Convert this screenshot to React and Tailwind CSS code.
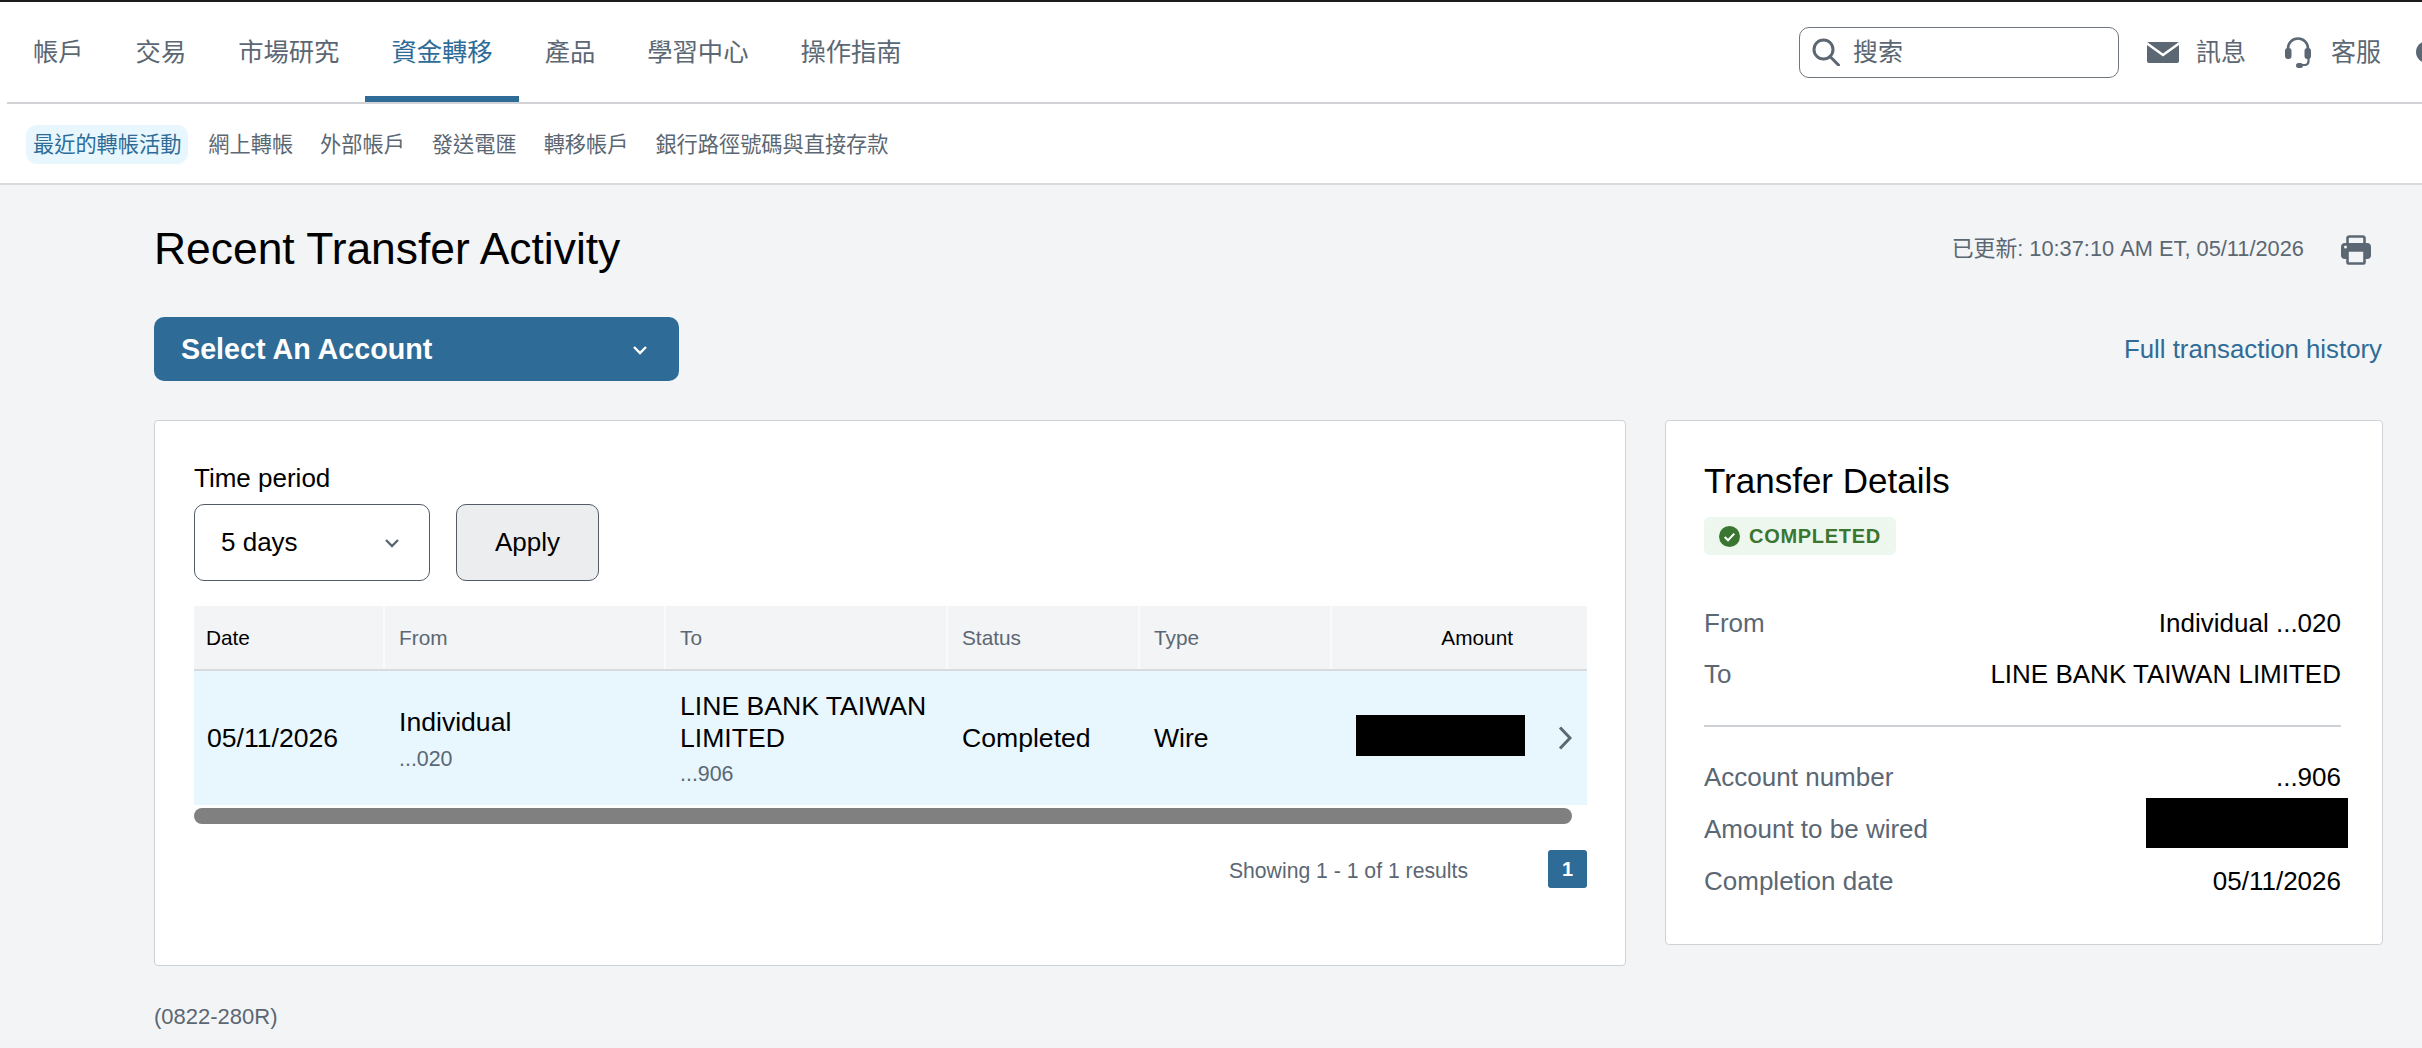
import React from 'react';

const mainNav = ['帳戶', '交易', '市場研究', '資金轉移', '產品', '學習中心', '操作指南'];
const subNav = ['最近的轉帳活動', '網上轉帳', '外部帳戶', '發送電匯', '轉移帳戶', '銀行路徑號碼與直接存款'];

const Chevron = ({ className = '' }) => (
  <svg viewBox="0 0 16 10" className={className} fill="none" stroke="currentColor" strokeWidth="2.4">
    <path d="M2 2l6 6 6-6" />
  </svg>
);

const SearchIcon = () => (
  <svg viewBox="0 0 28 28" className="w-[28px] h-[28px] shrink-0" fill="none" stroke="#5b6773" strokeWidth="3">
    <circle cx="11.5" cy="11.5" r="9.5" />
    <path d="M18 18.5l8.5 8.5" strokeLinecap="round" />
  </svg>
);

const MailIcon = () => (
  <svg viewBox="0 0 32 21" className="w-[32px] h-[21px] shrink-0">
    <rect width="32" height="21" rx="2" fill="#5b6773" />
    <path d="M0 1.5l16 11.5 16-11.5" fill="none" stroke="#fff" strokeWidth="2.6" />
  </svg>
);

const HeadsetIcon = () => (
  <svg viewBox="0 0 26 31" className="w-[26px] h-[31px] shrink-0" fill="none">
    <path d="M3 14V11.5a10 10 0 0 1 20 0V14" stroke="#5b6773" strokeWidth="2.6" />
    <rect x="0" y="11" width="6.5" height="11" rx="3" fill="#5b6773" />
    <rect x="19.5" y="11" width="6.5" height="11" rx="3" fill="#5b6773" />
    <path d="M23.5 21v3.5a3.5 3.5 0 0 1-3.5 3.5h-4" stroke="#5b6773" strokeWidth="2.2" />
    <rect x="11" y="26" width="7" height="5" rx="2.5" fill="#5b6773" />
  </svg>
);

const PrinterIcon = () => (
  <svg viewBox="0 0 30 30" className="w-[30px] h-[30px] shrink-0">
    <path d="M6.5 10V3.5a2 2 0 0 1 2-2h13a2 2 0 0 1 2 2V10" fill="none" stroke="#5b6773" strokeWidth="2.6" />
    <rect x="0" y="8" width="30" height="16" rx="4" fill="#5b6773" />
    <rect x="6.5" y="15.5" width="17" height="13" rx="1" fill="#f3f4f6" stroke="#5b6773" strokeWidth="2.6" />
    <circle cx="4.5" cy="12" r="1.5" fill="#f3f4f6" />
  </svg>
);

const CheckBadgeIcon = () => (
  <svg viewBox="0 0 22 22" className="w-[21px] h-[21px] shrink-0">
    <circle cx="11" cy="11" r="11" fill="#3a7630" />
    <path d="M6 11.5l3.5 3.5 6.5-7" fill="none" stroke="#fff" strokeWidth="2.2" />
  </svg>
);

const DetailRow = ({ label, children }) => (
  <div className="flex items-center justify-between h-[51px]">
    <span className="text-[#5b6773]">{label}</span>
    {children}
  </div>
);

const HeaderCell = ({ children, className = '' }) => (
  <div className={`flex items-center text-[20.8px] border-r-2 border-[#f9fafb] ${className}`}>
    {children}
  </div>
);

export default function App() {
  return (
    <div className="w-full h-[1048px] overflow-hidden bg-[#f3f4f6] text-[26px] text-black font-['Liberation_Sans','Noto_Sans_CJK_TC',sans-serif]">
      {/* Top nav */}
      <div className="bg-white border-t-2 border-[#1c1c1c]">
        <div className="flex ml-[7px] h-[102px] border-b-2 border-[#d1d3d6]">
          {mainNav.map((item, i) => (
            <div
              key={item}
              className={`flex items-center px-[26px] text-[25.3px] pt-[8px] border-b-[6px] ${i === 3 ? 'text-[#2e6c97] border-[#2e6c97]' : 'text-[#5b6773] border-transparent'}`}
            >
              {item}
            </div>
          ))}
          <div className="ml-auto flex items-center shrink-0 -mr-[16px] text-[25px] text-[#5b6773]">
            <div className="flex items-center gap-[13px] w-[320px] h-[51px] pl-[12px] rounded-[10px] border border-[#70767d]">
              <SearchIcon />
              <span className="pt-[2px]">搜索</span>
            </div>
            <div className="ml-[28px] mr-[17px]"><MailIcon /></div>
            <span className="pt-[2px]">訊息</span>
            <div className="ml-[39px] mr-[20px]"><HeadsetIcon /></div>
            <span className="pt-[2px]">客服</span>
            <div className="ml-[35px] w-[22px] h-[22px] rounded-full bg-[#5b6773]" />
          </div>
        </div>

        <div className="flex items-center gap-[13px] h-[79px] pl-[26px] pt-[2px] text-[21.2px] text-[#5b6773]">
          {subNav.map((item, i) => (
            <div
              key={item}
              className={`flex items-center h-[39px] px-[7px] rounded-[11px] ${i === 0 ? 'bg-[#e8f6fe] text-[#2e6c97]' : ''}`}
            >
              {item}
            </div>
          ))}
        </div>
      </div>

      {/* Page */}
      <div className="border-t-2 border-[#d8dade] pl-[154px] pr-[40px]">
        <div className="flex items-center justify-between h-[64px] mt-[35px]">
          <h1 className="text-[44.4px] font-normal pb-[6px]">Recent Transfer Activity</h1>
          <div className="flex items-center gap-[37px] pr-[11px] pb-[5px] text-[21.8px] text-[#5b6773]">
            <span>已更新: 10:37:10 AM ET, 05/11/2026</span>
            <PrinterIcon />
          </div>
        </div>

        <div className="flex items-center justify-between mt-[33px]">
          <div className="flex items-center justify-between w-[525px] h-[64px] pl-[27px] pr-[31px] pt-[2px] rounded-[10px] bg-[#2e6c97] text-white text-[28.7px] font-bold">
            Select An Account
            <Chevron className="w-[16px] h-[10px]" />
          </div>
          <span className="text-[#2e6c97] text-[25.8px]">Full transaction history</span>
        </div>

        <div className="flex items-start gap-[39px] mt-[39px]">
          {/* Activity card */}
          <div className="w-[1472px] h-[546px] shrink-0 bg-white border border-[#ced2d7] rounded-[4px] pl-[39px] pt-[42px]">
            <div className="leading-[30px]">Time period</div>
            <div className="flex gap-[26px] mt-[11px]">
              <div className="flex items-center justify-between w-[236px] h-[77px] pl-[26px] pr-[29px] rounded-[10px] border border-[#535b66]">
                5 days
                <Chevron className="w-[16px] h-[10px] text-[#5b6773]" />
              </div>
              <div className="flex items-center justify-center w-[143px] h-[77px] rounded-[10px] border border-[#535b66] bg-[#ecedef]">
                Apply
              </div>
            </div>

            <div className="w-[1393px] mt-[25px]">
              <div className="grid grid-cols-[191px_281px_282px_192px_192px_255px] h-[65px] bg-[#f3f4f6] border-b-2 border-[#d8dade] text-[#5b6773]">
                <HeaderCell className="text-black pl-[12px]">Date</HeaderCell>
                <HeaderCell className="pl-[14px]">From</HeaderCell>
                <HeaderCell className="pl-[14px]">To</HeaderCell>
                <HeaderCell className="pl-[14px]">Status</HeaderCell>
                <HeaderCell className="pl-[14px]">Type</HeaderCell>
                <div className="flex items-center justify-end pr-[74px] text-[20.8px] text-black">Amount</div>
              </div>
              <div className="grid grid-cols-[191px_281px_282px_192px_192px_255px] h-[134px] items-center bg-[#e8f6fe] text-[26.6px]">
                <div className="pl-[13px] pt-[1px]">05/11/2026</div>
                <div className="pl-[14px] pt-[2px]">
                  <div className="leading-[32px]">Individual</div>
                  <div className="text-[21.4px] text-[#5b6773] mt-[7px] leading-[28px]">...020</div>
                </div>
                <div className="pl-[14px] pt-[2px]">
                  <div className="leading-[32px]">LINE BANK TAIWAN LIMITED</div>
                  <div className="text-[21.4px] text-[#5b6773] mt-[6px] leading-[28px]">...906</div>
                </div>
                <div className="pl-[14px] pt-[1px]">Completed</div>
                <div className="pl-[14px] pt-[1px]">Wire</div>
                <div className="flex items-center pl-[24px]">
                  <div className="w-[169px] h-[41px] bg-black mb-[5px]" />
                  <svg viewBox="0 0 14 24" className="w-[14px] h-[24px] ml-[33px]" fill="none" stroke="#5b6773" strokeWidth="3">
                    <path d="M2 1.5l10 10.5-10 10.5" />
                  </svg>
                </div>
              </div>
              <div className="w-[1378px] h-[16px] mt-[3px] rounded-full bg-[#808080]" />
              <div className="flex items-center justify-end gap-[80px] mt-[26px]">
                <span className="text-[21.2px] text-[#5b6773] pt-[4px]">Showing 1 - 1 of 1 results</span>
                <div className="flex items-center justify-center w-[39px] h-[38px] rounded-[3px] bg-[#2e6c97] text-white text-[20px] font-bold">1</div>
              </div>
            </div>
          </div>

          {/* Details card */}
          <div className="w-[718px] h-[525px] shrink-0 bg-white border border-[#ced2d7] rounded-[4px] pl-[38px] pr-[41px] pt-[40px]">
            <h2 className="text-[35px] leading-[40px] font-normal">Transfer Details</h2>
            <div className="flex items-center gap-[9px] w-[192px] h-[38px] mt-[16px] pl-[15px] rounded-[6px] bg-[#edf7ed] text-[20px] font-bold tracking-[0.7px] text-[#3a7630]">
              <CheckBadgeIcon />
              COMPLETED
            </div>
            <div className="mt-[43px]">
              <DetailRow label="From"><span>Individual ...020</span></DetailRow>
              <DetailRow label="To"><span>LINE BANK TAIWAN LIMITED</span></DetailRow>
            </div>
            <div className="h-[2px] mt-[25px] mb-[25px] bg-[#ced2d7]" />
            <DetailRow label="Account number"><span>...906</span></DetailRow>
            <div className="pt-[1px]">
              <DetailRow label="Amount to be wired">
                <div className="w-[202px] h-[50px] -mr-[7px] mb-[13px] bg-black" />
              </DetailRow>
            </div>
            <div className="pt-[1px]">
              <DetailRow label="Completion date"><span>05/11/2026</span></DetailRow>
            </div>
          </div>
        </div>

        <div className="mt-[34px] text-[22px] text-[#5b6773]">(0822-280R)</div>
      </div>
    </div>
  );
}
